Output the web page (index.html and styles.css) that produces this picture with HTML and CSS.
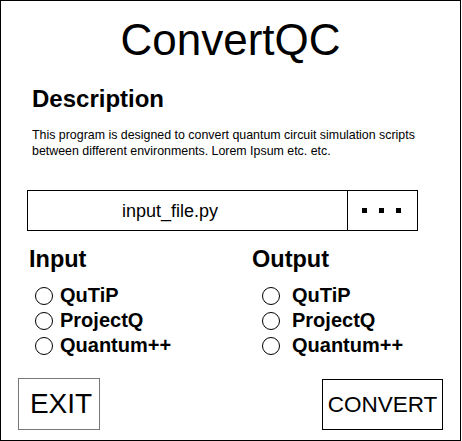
FILE: index.html
```html
<!DOCTYPE html>
<html>
<head>
<meta charset="utf-8">
<link rel="stylesheet" href="styles.css">
</head>
<body>
<div class="frame">
  <h1 class="title">ConvertQC</h1>
  <section class="desc">
    <h2 class="desc-head">Description</h2>
    <p class="desc-text">This program is designed to convert quantum circuit simulation scripts<br>between different environments. Lorem Ipsum etc. etc.</p>
  </section>
  <div class="file-box">
    <div class="file-name">input_file.py</div>
    <div class="file-browse"><span class="dot"></span><span class="dot"></span><span class="dot"></span></div>
  </div>
  <div class="columns">
    <div class="col col-in">
      <h3 class="col-head">Input</h3>
      <ul class="opts">
        <li class="opt"><span class="radio"></span>QuTiP</li>
        <li class="opt"><span class="radio"></span>ProjectQ</li>
        <li class="opt"><span class="radio"></span>Quantum++</li>
      </ul>
    </div>
    <div class="col col-out">
      <h3 class="col-head">Output</h3>
      <ul class="opts">
        <li class="opt"><span class="radio"></span>QuTiP</li>
        <li class="opt"><span class="radio"></span>ProjectQ</li>
        <li class="opt"><span class="radio"></span>Quantum++</li>
      </ul>
    </div>
  </div>
  <div class="actions">
    <div class="btn btn-exit">EXIT</div>
    <div class="btn btn-convert">CONVERT</div>
  </div>
</div>
</body>
</html>
```

FILE: styles.css
```css
* { box-sizing: border-box; }
html, body { margin: 0; padding: 0; background: #fff; }
body { font-family: "Liberation Sans", Arial, sans-serif; color: #000; }

.frame {
  width: 461px;
  height: 441px;
  border: 1px solid #000;
  display: flex;
  flex-direction: column;
  padding-top: 14px;
}

.title {
  margin: 0;
  font-size: 44px;
  line-height: 50px;
  font-weight: normal;
  text-align: center;
}

.desc { padding-left: 31px; margin-top: 20px; }
.desc-head {
  margin: 0;
  font-size: 24px;
  line-height: 28px;
  font-weight: bold;
}
.desc-text {
  margin: 14px 0 0;
  font-size: 12.4px;
  line-height: 16px;
  white-space: nowrap;
}

.file-box {
  margin: 31px 0 0 26px;
  width: 391px;
  height: 41px;
  border: 1px solid #000;
  display: flex;
}
.file-name {
  flex: 1;
  border-right: 1px solid #000;
  display: flex;
  align-items: center;
  justify-content: center;
  padding-right: 35px;
  font-size: 18px;
  line-height: 20px;
}
.file-browse {
  width: 69px;
  display: flex;
  align-items: center;
  justify-content: center;
  gap: 12px;
  padding-right: 3px;
}
.dot { width: 5px; height: 5px; background: #000; }

.columns {
  margin-top: 15px;
  padding-left: 28px;
  display: grid;
  grid-template-columns: 223px 1fr;
}
.col-head {
  margin: 0;
  font-size: 23.5px;
  line-height: 26px;
  font-weight: bold;
}
.opts {
  list-style: none;
  margin: 11px 0 0;
  padding: 0;
}
.col-in .opts { padding-left: 6px; }
.col-out .opts { padding-left: 10px; }
.opt {
  display: flex;
  align-items: center;
  gap: 7px;
  height: 25px;
  font-size: 20px;
  line-height: 25px;
  font-weight: bold;
}
.col-out .opt { gap: 12px; }
.radio {
  display: block;
  flex: 0 0 18px;
  width: 18px;
  height: 18px;
  border: 1.2px solid #000;
  border-radius: 50%;
}

.actions {
  margin-top: auto;
  margin-bottom: 10px;
  padding: 0 17px 0 17px;
  display: flex;
  justify-content: space-between;
  align-items: flex-end;
}
.btn {
  display: flex;
  align-items: center;
  justify-content: center;
}
.btn-exit {
  width: 82px;
  height: 52px;
  border: 1px solid #777;
  font-size: 28px;
  padding-left: 4px;
}
.btn-convert {
  width: 121px;
  height: 51px;
  border: 1px solid #000;
  font-size: 22.5px;
}
```
